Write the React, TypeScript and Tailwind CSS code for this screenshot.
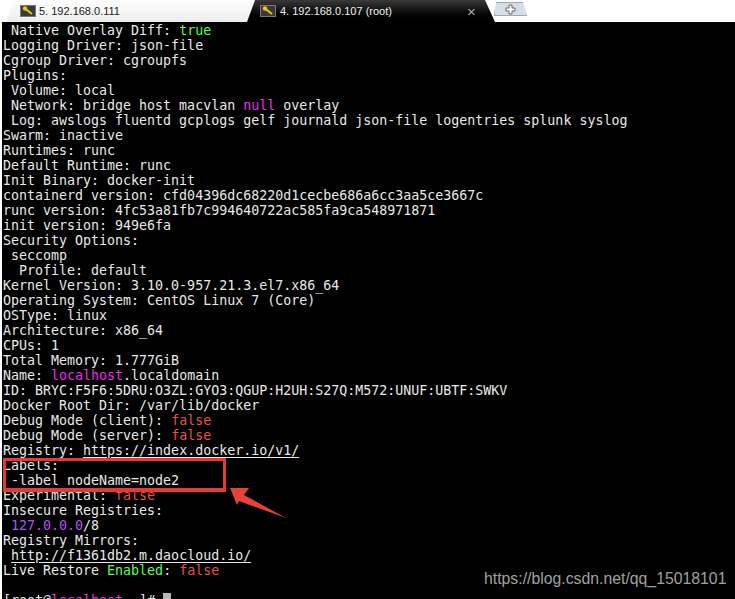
import type { ReactNode } from "react";

const G = ({ children }: { children: ReactNode }) => <span className="text-[#55ff55]">{children}</span>;
const R = ({ children }: { children: ReactNode }) => <span className="text-[#e8504f]">{children}</span>;
const M = ({ children }: { children: ReactNode }) => <span className="text-[#f02cf0]">{children}</span>;
const U = ({ children }: { children: ReactNode }) => <span className="underline underline-offset-2">{children}</span>;

function KeyIcon() {
  return (
    <svg width="16" height="12" viewBox="0 0 16 12" className="shrink-0">
      <rect x="0.5" y="0.5" width="15" height="11" fill="#3a3a3a" stroke="#777" />
      <path d="M5 3.5 L12 9" stroke="#f2c21a" strokeWidth="2" />
      <circle cx="5" cy="3.5" r="2.2" fill="#f2c21a" />
    </svg>
  );
}

function TabBar() {
  return (
    <div className="relative flex h-[22px] items-stretch bg-white font-['Liberation_Sans',sans-serif] text-[11px]">
      <div className="ml-[7px] flex w-[245px] items-center bg-gradient-to-b from-white to-[#ececec] pl-[13px] text-[#222] [clip-path:polygon(6px_0,100%_0,100%_100%,0_100%)]">
        <KeyIcon />
        <span className="ml-[3px]">5. 192.168.0.111</span>
        <span className="ml-[107px] text-[15px] leading-none text-[#f7f7f7]">×</span>
      </div>
      <div className="-ml-[5px] flex w-[248px] items-center bg-gradient-to-b from-[#3a3a3a] to-black pl-[13px] text-[#eeeeee] [clip-path:polygon(8px_0,238px_0,100%_100%,0_100%)]">
        <KeyIcon />
        <span className="ml-[4px]">4. 192.168.0.107 (root)</span>
        <span className="ml-[75px] text-[15px] leading-none text-[#aaaaaa]">×</span>
      </div>
      <div className="mt-[2px] -ml-[1px] flex h-[14px] w-[33px] items-center justify-center border border-[#9aa7b5] bg-[#d5dee8] [clip-path:polygon(2px_0,29px_0,100%_100%,0_100%)]">
        <svg width="11" height="11" viewBox="0 0 11 11">
          <path d="M4 1 H7 V4 H10 V7 H7 V10 H4 V7 H1 V4 H4 Z" fill="#fff" stroke="#666" />
        </svg>
      </div>
    </div>
  );
}

const lines: ReactNode[] = [
  <> Native Overlay Diff: <G>true</G></>,
  "Logging Driver: json-file",
  "Cgroup Driver: cgroupfs",
  "Plugins:",
  " Volume: local",
  <> Network: bridge host macvlan <M>null</M> overlay</>,
  " Log: awslogs fluentd gcplogs gelf journald json-file logentries splunk syslog",
  "Swarm: inactive",
  "Runtimes: runc",
  "Default Runtime: runc",
  "Init Binary: docker-init",
  "containerd version: cfd04396dc68220d1cecbe686a6cc3aa5ce3667c",
  "runc version: 4fc53a81fb7c994640722ac585fa9ca548971871",
  "init version: 949e6fa",
  "Security Options:",
  " seccomp",
  "  Profile: default",
  "Kernel Version: 3.10.0-957.21.3.el7.x86_64",
  "Operating System: CentOS Linux 7 (Core)",
  "OSType: linux",
  "Architecture: x86_64",
  "CPUs: 1",
  "Total Memory: 1.777GiB",
  <>Name: <M>localhost</M>.localdomain</>,
  "ID: BRYC:F5F6:5DRU:O3ZL:GYO3:QGUP:H2UH:S27Q:M572:UNUF:UBTF:SWKV",
  "Docker Root Dir: /var/lib/docker",
  <>Debug Mode (client): <R>false</R></>,
  <>Debug Mode (server): <R>false</R></>,
  <>Registry: <U>https://index.docker.io/v1/</U></>,
  "Labels:",
  " -label nodeName=node2",
  <>Experimental: <R>false</R></>,
  "Insecure Registries:",
  <> <span className="text-[#b44cff]">127.0.0.0</span>/8</>,
  "Registry Mirrors:",
  <> <U>http://f1361db2.m.daocloud.io/</U></>,
  <>Live Restore <G>Enabled</G>: <R>false</R></>,
  "\u00a0",
  <>[root@<M>localhost</M> ~]# <span className="inline-block h-[15px] w-[8px] bg-[#b5b5b5] align-top" /></>,
];

export default function App() {
  return (
    <div className="relative h-[599px] w-[735px] overflow-hidden bg-white">
      <TabBar />
      <div className="ml-[2px] h-[577px] overflow-hidden bg-black pl-px pt-px font-['DejaVu_Sans_Mono',monospace] text-[13.3px] leading-[15px] text-[#e8e8e8]">
        {lines.map((line, i) => (
          <div key={i} className="h-[15px] whitespace-pre">
            {line}
          </div>
        ))}
      </div>

      {/* annotation added over the screenshot */}
      <div className="absolute left-[3px] top-[458px] h-[34px] w-[223px] border-[3px] border-b-4 border-[#e53935]" />
      <svg className="absolute left-[225px] top-[484px]" width="66" height="40" viewBox="0 0 66 40">
        <polygon points="5,4 24,4 19,11 61,34 14,17 12,21" fill="#e8403c" />
      </svg>
      <span className="absolute left-[484px] top-[570px] font-['Liberation_Sans',sans-serif] text-[15.8px] leading-[18px] text-[#a0a0a0]">
        https://blog.csdn.net/qq_15018101
      </span>
    </div>
  );
}
